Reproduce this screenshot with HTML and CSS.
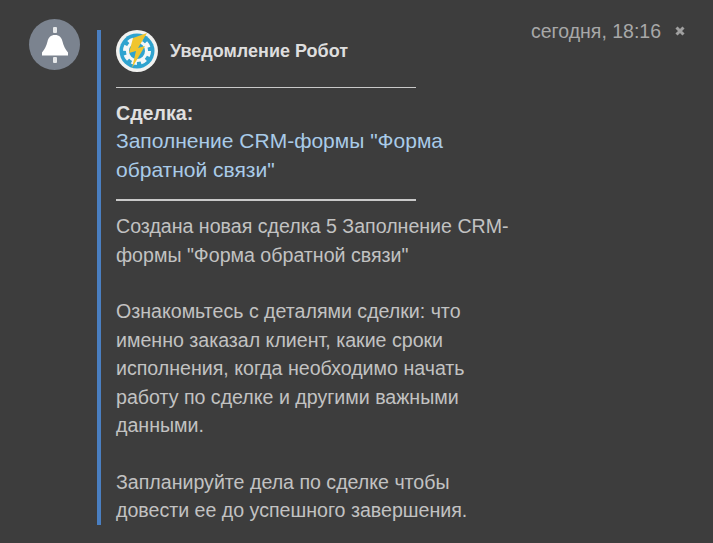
FILE: index.html

```html
<!DOCTYPE html>
<html lang="ru">
<head>
  <meta charset="UTF-8">
  <title>Уведомление</title>
  <link rel="stylesheet" href="styles.css">
</head>
<body>
  <div class="notify">
    <div class="bell">
      <svg width="28" height="36" viewBox="0 0 28 36">
        <rect x="12" y="0" width="4" height="6" rx="1" fill="#e6e8ea"/>
        <path d="M14 8c4.500 0 6.500 2.500 7.500 6.500 1.200 5 2.700 7.500 5.500 11v3H1v-3c2.800-3.500 4.300-6 5.500-11C7.500 10.500 9.500 8 14 8z" fill="#fff"/>
        <rect x="12" y="30" width="4" height="6" rx="1" fill="#e6e8ea"/>
      </svg>
    </div>
    <div class="message">
      <div class="author">
        <svg class="logo" width="42" height="42" viewBox="0 0 42 42">
          <circle cx="21" cy="21" r="21" fill="#f2f2f0"/>
          <circle cx="21" cy="21" r="17.500" fill="#2fa3cf"/>
          <circle cx="21" cy="21" r="9.500" fill="none" stroke="#f5f7f7" stroke-width="3"/>
          <circle cx="21" cy="21" r="12" fill="none" stroke="#f5f7f7" stroke-width="4" stroke-dasharray="5.400 4"/>
          <path d="M31 3L17 8l-4 15 7-2-4 17 13-22-7 2z" fill="#f0c52e"/>
        </svg>
        <b>Уведомление Робот</b>
      </div>
      <hr>
      <div class="deal">
        <b>Сделка:</b><br>
        <a href="#">Заполнение CRM-формы "Форма обратной связи"</a>
      </div>
      <hr class="hr-bottom">
      <p>Создана новая сделка 5 Заполнение CRM-формы "Форма обратной связи"</p>
      <p>Ознакомьтесь с деталями сделки: что именно заказал клиент, какие сроки исполнения, когда необходимо начать работу по сделке и другими важными данными.</p>
      <p>Запланируйте дела по сделке чтобы довести ее до успешного завершения.</p>
    </div>
    <div class="date">сегодня, 18:16</div>
    <svg class="close" width="10" height="10" viewBox="0 0 10 10">
      <path d="M1.500 1.500l7 7M8.500 1.500l-7 7" stroke="#a0a0a0" stroke-width="3"/>
    </svg>
  </div>
</body>
</html>
```

FILE: styles.css

```css
body {
  background-color: #3d3d3d;
  font-family: "Liberation Sans", Arial, sans-serif;
  margin: 0;
  height: 543px;
  overflow: hidden;
}
.notify {
  display: flex;
  align-items: flex-start;
  padding: 19px 0 0 29px;
}
.bell {
  width: 51px;
  height: 51px;
  border-radius: 50%;
  background-color: #7b838f;
  display: flex;
  align-items: center;
  justify-content: center;
  flex-shrink: 0;
}
.message {
  width: 396px;
  margin: 11px 0 0 17px;
  padding: 0 0 0 15px;
  border-left: 4px solid #4a7fc1;
  height: 495px;
  font-size: 19.6px;
  line-height: 28.4px;
  color: #c2c2c2;
  flex-shrink: 0;
}
.author {
  display: flex;
  align-items: center;
  gap: 12px;
  font-size: 18px;
  color: #dedede;
  height: 42px;
}
.logo {
  flex-shrink: 0;
}
hr {
  width: 300px;
  height: 1px;
  margin: 15px 0 11px;
  border: 0;
  background-color: #c9c9c9;
}
.hr-bottom {
  height: 2px;
  margin: 15px 0 11px;
}
.deal b {
  color: #e0e0e0;
}
.deal a {
  font-size: 21px;
  color: #a9cbe8;
  text-decoration: none;
}
p {
  margin: 0 0 28.4px;
}
.date {
  margin-left: 19px;
  font-size: 19.5px;
  line-height: 24px;
  color: #a8a8a8;
  white-space: nowrap;
}
.close {
  margin: 7px 0 0 14px;
}
```
